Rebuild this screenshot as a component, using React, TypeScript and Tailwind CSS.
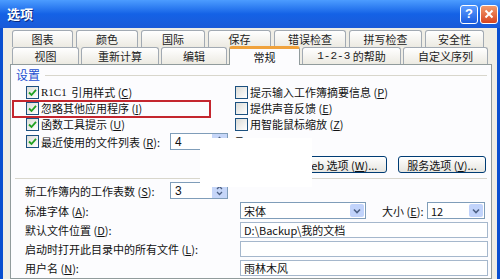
import type { ReactNode } from 'react';

const K = ({ c }: { c: string }) => (
  <span>
    (<span className="underline">{c}</span>)
  </span>
);

function Check({ on }: { on?: boolean }) {
  return (
    <span className="flex h-[13px] w-[13px] shrink-0 items-center justify-center border border-[#1c5180] bg-linear-to-br from-[#dcdcd7] to-white">
      {on && (
        <svg width="9" height="9" viewBox="0 0 9 9">
          <path d="M1 4.5 L3.5 7 L8 1.8" fill="none" stroke="#21a121" strokeWidth="1.8" />
        </svg>
      )}
    </span>
  );
}

function Tab({ w, children, active }: { w: number; children: ReactNode; active?: boolean }) {
  if (active) {
    return (
      <div
        style={{ width: w }}
        className="relative z-10 -mt-[2px] -mb-px flex h-[19px] items-center justify-center whitespace-nowrap rounded-t-[3px] border-x border-t-[3px] border-x-[#919b9c] border-t-[#f0a23c] bg-[#fcfcfe] text-[11px]"
      >
        {children}
      </div>
    );
  }
  return (
    <div
      style={{ width: w }}
      className="flex h-[17px] items-center justify-center whitespace-nowrap rounded-t-[3px] border-x border-t border-[#a2aab3] bg-linear-to-b from-white to-[#eceae2] text-[11px] text-[#222]"
    >
      {children}
    </div>
  );
}

function Spinner({ v }: { v: string }) {
  return (
    <div className="flex h-[17px] w-[58px] shrink-0 items-center border border-[#7f9db9] bg-white">
      <span className="flex-1 pl-[4px] text-[12px] [font-family:'Liberation_Sans',sans-serif]">{v}</span>
      <span className="flex h-full w-[15px] flex-col items-center justify-center bg-[#c6d6f8]">
        <svg width="7" height="11" viewBox="0 0 7 11">
          <path d="M1 4 L3.5 1.5 L6 4 M1 7 L3.5 9.5 L6 7" fill="none" stroke="#4d6185" strokeWidth="1.3" />
        </svg>
      </span>
    </div>
  );
}

function Combo({ v, w }: { v: string; w: number }) {
  return (
    <div style={{ width: w }} className="flex h-[17px] shrink-0 items-center border border-[#7f9db9] bg-white">
      <span className="flex-1 pl-[3px] text-[11px]">{v}</span>
      <span className="m-px flex h-[13px] w-[14px] items-center justify-center rounded-[2px] bg-[#c1d3fb]">
        <svg width="8" height="6" viewBox="0 0 8 6">
          <path d="M1 1.5 L4 4.5 L7 1.5" fill="none" stroke="#4d6185" strokeWidth="1.6" />
        </svg>
      </span>
    </div>
  );
}

function Field({ v }: { v?: string }) {
  return (
    <div className="flex h-[16px] w-[248px] shrink-0 items-center whitespace-nowrap border border-[#a5b7cc] bg-white pl-[3px] text-[11px]">
      {v}
    </div>
  );
}

export default function App() {
  return (
    <div className="relative flex h-[279px] w-[500px] flex-col overflow-hidden bg-[#0a4fd0] text-[#111] [font-family:'Noto_Sans_CJK_SC','Liberation_Sans',sans-serif]">
      {/* title bar */}
      <div className="flex h-[28px] shrink-0 items-center bg-linear-to-b from-[#4c9cff] via-[#1462e6] to-[#1a5ad8] pl-[7px] pr-[2px]">
        <span className="flex-1 text-[13px] font-bold text-white [text-shadow:1px_1px_0_#0a2a80]">选项</span>
        <div className="flex gap-[2px]">
          <span className="flex h-[19px] w-[18px] items-center justify-center rounded-[3px] border border-white bg-linear-to-b from-[#5d9cff] to-[#1a5ce0] text-[13px] font-bold text-white [font-family:'Liberation_Sans',sans-serif]">
            ?
          </span>
          <span className="flex h-[19px] w-[18px] items-center justify-center rounded-[3px] border border-white bg-linear-to-b from-[#f29a6c] to-[#d6411c]">
            <svg width="10" height="10" viewBox="0 0 10 10">
              <path d="M1.5 1.5 L8.5 8.5 M8.5 1.5 L1.5 8.5" stroke="white" strokeWidth="2" />
            </svg>
          </span>
        </div>
      </div>

      {/* body */}
      <div className="ml-[3px] mr-[3px] flex flex-1 flex-col bg-[#efede5] pl-[7px] pr-[5px] pt-[2px]">
        <div className="flex gap-[3px] pl-[2px]">
          <Tab w={61}>图表</Tab>
          <Tab w={62}>颜色</Tab>
          <Tab w={64}>国际</Tab>
          <Tab w={63}>保存</Tab>
          <Tab w={72}>错误检查</Tab>
          <Tab w={73}>拼写检查</Tab>
          <Tab w={59}>安全性</Tab>
        </div>
        <div className="flex items-end gap-[2px] pl-[2px]">
          <Tab w={67}>视图</Tab>
          <Tab w={78}>重新计算</Tab>
          <Tab w={66}>编辑</Tab>
          <Tab w={71} active>常规</Tab>
          <Tab w={99}>
            <span className="[font-family:'Liberation_Mono',monospace]">1-2-3</span>&nbsp;的帮助
          </Tab>
          <Tab w={85}>自定义序列</Tab>
        </div>

        {/* panel */}
        <div className="flex flex-1 flex-col whitespace-nowrap border border-[#919b9c] bg-[#fcfcfe] text-[11px] leading-[14px]">
          <div className="mt-[3px] flex h-[14px] items-center pl-[5px]">
            <span className="text-[12px] text-[#1b4fd0]">设置</span>
            <span className="ml-[5px] mr-[4px] h-px flex-1 bg-[#d8d6cc]" />
          </div>

          <div className="mt-[2px] flex flex-col pl-[15px]">
            <div className="flex h-[16px] items-center">
              <div className="flex w-[209px] items-center gap-[2px]">
                <Check on />
                <span className="[font-family:'Liberation_Serif',serif]">R1C1</span>
                <span>&nbsp;引用样式 <K c="C" /></span>
              </div>
              <div className="flex items-center gap-[2px]">
                <Check />
                <span>提示输入工作簿摘要信息 <K c="P" /></span>
              </div>
            </div>
            <div className="flex h-[16px] items-center">
              <div className="flex w-[209px] items-center gap-[2px]">
                <Check on />
                <span>忽略其他应用程序 <K c="I" /></span>
              </div>
              <div className="flex items-center gap-[2px]">
                <Check />
                <span>提供声音反馈 <K c="E" /></span>
              </div>
            </div>
            <div className="flex h-[16px] items-center">
              <div className="flex w-[209px] items-center gap-[2px]">
                <Check on />
                <span>函数工具提示 <K c="U" /></span>
              </div>
              <div className="flex items-center gap-[2px]">
                <Check />
                <span>用智能鼠标缩放 <K c="Z" /></span>
              </div>
            </div>
            <div className="mt-[1px] flex h-[17px] items-center">
              <div className="flex w-[144px] shrink-0 items-center gap-[2px]">
                <Check on />
                <span>最近使用的文件列表 <K c="R" />:</span>
              </div>
              <Spinner v="4" />
              <span className="ml-[4px]">项</span>
            </div>
          </div>

          <div className="mt-[6px] flex justify-end gap-[11px] pr-[5px]">
            <button className="h-[17px] w-[95px] rounded-[3px] border border-[#003c74] bg-linear-to-b from-white to-[#e6e5df] text-[11px]">
              Web 选项 <K c="W" />...
            </button>
            <button className="h-[17px] w-[88px] rounded-[3px] border border-[#003c74] bg-linear-to-b from-white to-[#e6e5df] text-[11px]">
              服务选项 <K c="V" />...
            </button>
          </div>

          <div className="mx-[4px] mt-[5px] h-px bg-[#d8d6cc]" />

          <div className="mt-[3px] flex flex-col gap-[3px] pl-[14px]">
            <div className="flex h-[17px] items-center">
              <span className="w-[145px] shrink-0">新工作簿内的工作表数 <K c="S" />:</span>
              <Spinner v="3" />
            </div>
            <div className="flex h-[17px] items-center">
              <span className="w-[215px] shrink-0">标准字体 <K c="A" />:</span>
              <Combo v="宋体" w={126} />
              <span className="ml-[16px] w-[45px] shrink-0">大小 <K c="E" />:</span>
              <Combo v="12" w={58} />
            </div>
            <div className="flex h-[16px] items-center">
              <span className="w-[215px] shrink-0">默认文件位置 <K c="D" />:</span>
              <Field v="D:\Backup\我的文档" />
            </div>
            <div className="flex h-[16px] items-center">
              <span className="w-[215px] shrink-0">启动时打开此目录中的所有文件 <K c="L" />:</span>
              <Field />
            </div>
            <div className="flex h-[16px] items-center">
              <span className="w-[215px] shrink-0">用户名 <K c="N" />:</span>
              <Field v="雨林木风" />
            </div>
          </div>
        </div>
      </div>

      {/* annotation overlays */}
      <div className="absolute left-[12px] top-[100px] h-[18px] w-[199px] border-2 border-[#c4262e]" />
      <div className="absolute left-[200px] top-[138px] h-[49px] w-[112px] bg-white" />
    </div>
  );
}
